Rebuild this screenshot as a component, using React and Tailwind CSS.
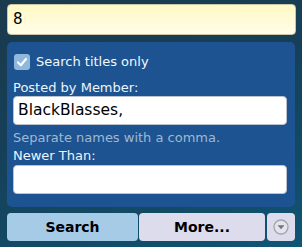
export default function App() {
  return (
    <div
      className="w-[302px] h-[247px] overflow-hidden bg-[linear-gradient(160deg,#1b3a4d_0%,#163f57_40%,#124a66_75%,#0f5676_100%)]"
      style={{ fontFamily: '"DejaVu Sans", Verdana, sans-serif' }}
    >
      <div className="pt-[4px] pl-[7px]">
        <div className="w-[289px] h-[31px] rounded-[4px] border border-[#c9c6a8] bg-[linear-gradient(180deg,#fff9c4_0%,#fffde9_100%)] flex items-center pl-[5px] text-[15px] text-black">
          8
        </div>
      </div>

      <div className="mt-[7px] ml-[7px] w-[288px] h-[165px] rounded-[5px] bg-[#1c5390] pt-[12px] pl-[6px] pr-[8px] flex flex-col">
        <div className="h-[16px] flex items-center">
          <div className="ml-[1px] w-[16px] h-[16px] rounded-[3px] bg-[#8fb8dc] flex items-center justify-center">
            <svg width="12" height="12" viewBox="0 0 12 12">
              <polyline
                points="2,6.5 4.8,9.2 10,3"
                fill="none"
                stroke="#ffffff"
                strokeWidth="2.2"
                strokeLinecap="round"
                strokeLinejoin="round"
              />
            </svg>
          </div>
          <span className="ml-[6px] text-[13px] leading-[16px] text-[#f4f7fb]">Search titles only</span>
        </div>

        <div className="mt-[10px] text-[13px] leading-[16px] text-[#eef3f9]">Posted by Member:</div>
        <div className="w-[274px] h-[29px] rounded-[4px] border border-[#b9c3cf] bg-white flex items-center pl-[4px] text-[15.5px] text-black">
          BlackBlasses,
        </div>

        <div className="mt-[5px] text-[13px] leading-[16px] text-[#9fb9d3]">Separate names with a comma.</div>
        <div className="mt-[2px] text-[13px] leading-[16px] text-[#eef3f9]">Newer Than:</div>
        <div className="mt-[1px] w-[274px] h-[29px] rounded-[4px] border border-[#b9c3cf] bg-white"></div>
      </div>

      <div className="mt-[6px] ml-[7px] flex h-[28px]">
        <div className="w-[131px] h-[28px] rounded-[4px] bg-[#a6cbe6] flex items-center justify-center text-[14px] font-bold text-black">
          Search
        </div>
        <div className="ml-[1px] w-[126px] h-[28px] rounded-[4px] bg-[#dcdced] flex items-center justify-center text-[14px] font-bold text-black">
          More...
        </div>
        <div className="ml-[2px] w-[28px] h-[28px] rounded-[4px] bg-[#dcdced] flex items-center justify-center">
          <svg width="16" height="16" viewBox="0 0 16 16">
            <circle cx="8" cy="8" r="7" fill="#e4e4ee" stroke="#a4a4ae" strokeWidth="1.3" />
            <polygon points="4.5,6.3 11.5,6.3 8,10.2" fill="#74747c" />
          </svg>
        </div>
      </div>
    </div>
  );
}
